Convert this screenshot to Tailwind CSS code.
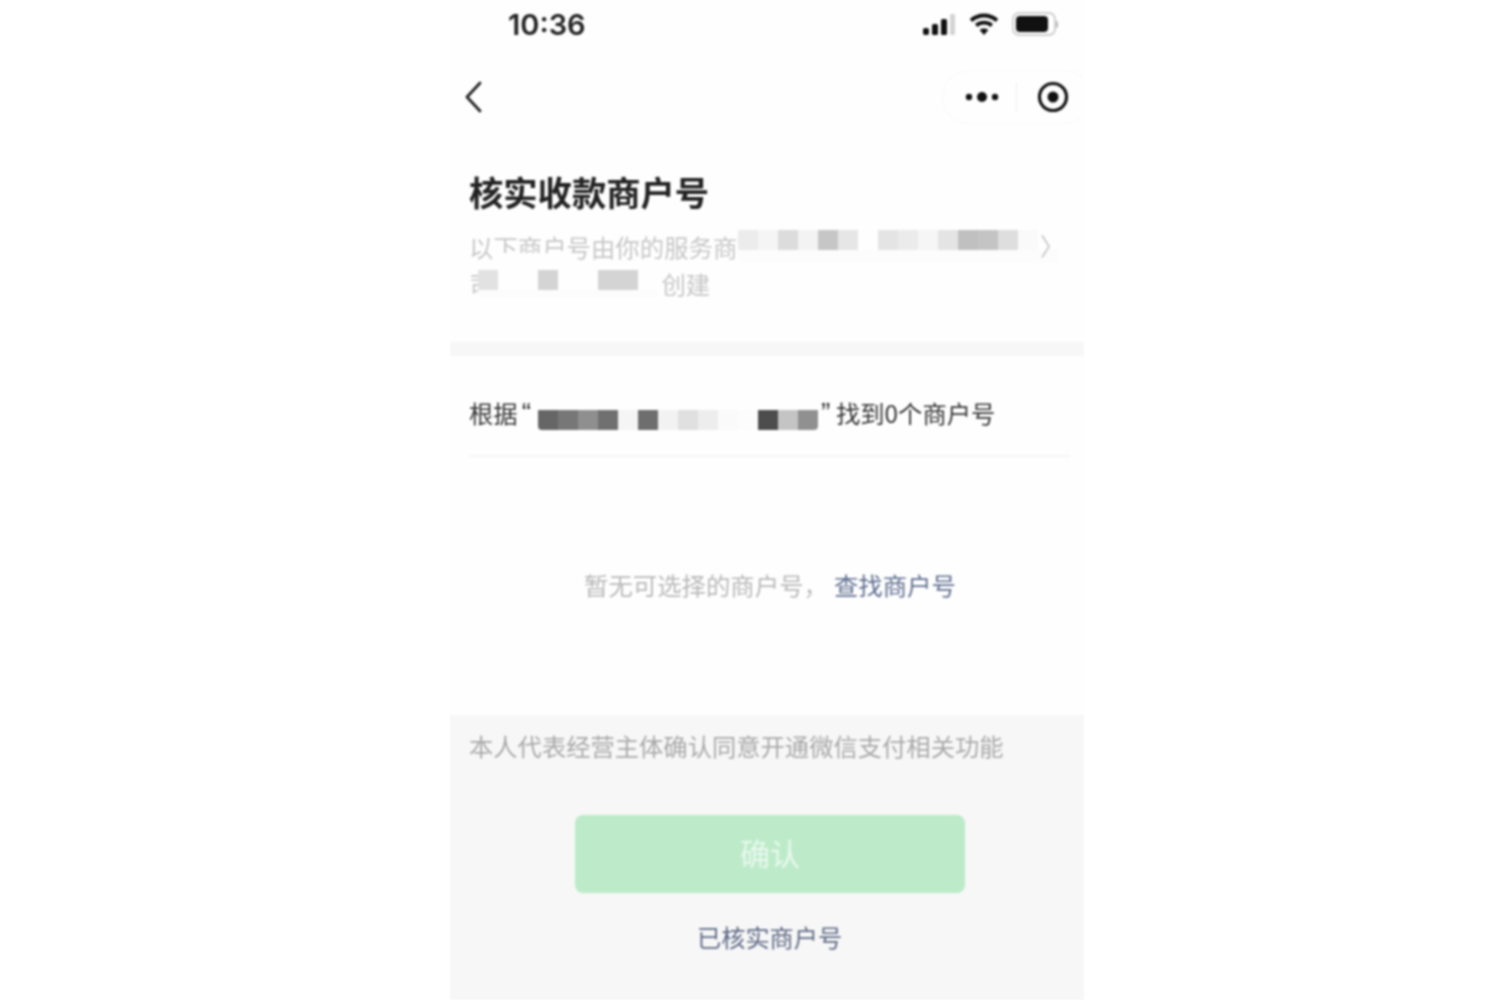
<!DOCTYPE html>
<html lang="zh-CN">
<head>
    <meta charset="UTF-8">
    <title>核实收款商户号</title>
    <script src="https://cdn.jsdelivr.net/npm/@tailwindcss/browser@4"></script>
</head>
<body class="bg-white font-['Noto_Sans_CJK_SC','Noto_Sans',sans-serif]">
    <div class="w-[634px] h-[1000px] ml-[450px] overflow-hidden flex flex-col blur-[0.8px] bg-[#fefefe]">
        <!-- Status bar -->
        <div class="h-[48px] shrink-0 flex items-center justify-between pl-[58px] pr-[26px]">
            <span class="font-['Inter',sans-serif] text-[29px] font-semibold text-[#222] leading-none">10:36</span>
            <div class="flex items-center gap-[13px]">
                <svg width="34" height="24" viewBox="0 0 34 24">
                    <rect x="1" y="16" width="6" height="7" rx="2" fill="#111"/>
                    <rect x="10" y="12" width="6" height="11" rx="1.5" fill="#111"/>
                    <rect x="19" y="7" width="6" height="16" rx="1.5" fill="#111"/>
                    <rect x="28" y="2" width="5" height="21" rx="1" fill="#d4d4d4"/>
                </svg>
                <svg width="30" height="24" viewBox="0 0 30 24" fill="none" stroke="#111" stroke-width="3.8">
                    <path d="M2 8.500C9.500 1.800 20.500 1.800 28 8.500"/>
                    <path d="M7.200 13.500C11.700 9.700 18.300 9.700 22.800 13.500"/>
                    <path d="M15 23l-4.300-5c2.500-1.900 6.100-1.900 8.600 0z" fill="#111" stroke="none"/>
                </svg>
                <div class="flex items-center">
                    <div class="w-[44px] h-[24px] rounded-[7px] border-2 border-[#cfcfcf] p-[2px]">
                        <div class="w-[32px] h-full rounded-[4px] bg-[#111]"></div>
                    </div>
                    <div class="w-[2px] h-[7px] bg-[#bbb] rounded-r-sm"></div>
                </div>
            </div>
        </div>

        <!-- Nav -->
        <div class="h-[54px] mt-[22px] shrink-0 flex items-center justify-between pl-[13px]">
            <svg width="22" height="34" viewBox="0 0 22 34" fill="none" stroke="#222" stroke-width="2.8" stroke-linecap="round" stroke-linejoin="round">
                <path d="M17 3L4 17l13 14"/>
            </svg>
            <div class="w-[150px] h-[54px] -mr-[8px] rounded-full border border-[#f9f9f9] flex items-center pl-[22px] shrink-0">
                <svg width="34" height="12" viewBox="0 0 34 12" fill="#111">
                    <circle cx="4" cy="6" r="3.200"/>
                    <circle cx="17" cy="6" r="5"/>
                    <circle cx="30" cy="6" r="3.200"/>
                </svg>
                <div class="w-px h-[30px] bg-[#eeeeee] ml-[17px]"></div>
                <svg class="ml-[20px]" width="32" height="32" viewBox="0 0 32 32">
                    <circle cx="16" cy="16" r="13.500" fill="none" stroke="#111" stroke-width="3.200"/>
                    <circle cx="16" cy="16" r="5.500" fill="#111"/>
                </svg>
            </div>
        </div>

        <!-- Title -->
        <h1 class="mt-[44px] pl-[19px] h-[48px] shrink-0 text-[34.300px] leading-[46px] font-semibold text-[#222] whitespace-nowrap">核实收款商户号</h1>

        <!-- Description, partly redacted -->
        <div class="relative mt-[12px] h-[74px] shrink-0 pl-[19px] text-[24.400px] leading-[37px] text-[#c6c6c6]">
            <p class="whitespace-nowrap">以下商户号由你的服务商</p>
            <p class="whitespace-nowrap">司<span class="ml-[168px]">创建</span></p>
            <div class="absolute left-[42px] top-[25px] w-[74px] h-[14px] bg-[#fefefe]"></div>
            <div class="absolute left-[288px] top-[2px] flex">
                <div class="w-[20px] h-[20px] bg-[#ececec]"></div>
                <div class="w-[20px] h-[20px] bg-[#f5f5f5]"></div>
                <div class="w-[20px] h-[20px] bg-[#dcdcdc]"></div>
                <div class="w-[20px] h-[20px] bg-[#f3f3f3]"></div>
                <div class="w-[20px] h-[20px] bg-[#c6c6c6]"></div>
                <div class="w-[20px] h-[20px] bg-[#e6e6e6]"></div>
                <div class="w-[20px] h-[20px] bg-[#fefefe]"></div>
                <div class="w-[20px] h-[20px] bg-[#e4e4e4]"></div>
                <div class="w-[20px] h-[20px] bg-[#ebebeb]"></div>
                <div class="w-[20px] h-[20px] bg-[#f6f6f6]"></div>
                <div class="w-[20px] h-[20px] bg-[#e4e4e4]"></div>
                <div class="w-[20px] h-[20px] bg-[#c0c0c0]"></div>
                <div class="w-[20px] h-[20px] bg-[#c4c4c4]"></div>
                <div class="w-[20px] h-[20px] bg-[#dedede]"></div>
                <div class="w-[20px] h-[20px] bg-[#fafafa]"></div>
            </div>
            <div class="absolute left-[288px] top-[22px] w-[320px] h-[12px] bg-[#fcfcfc]"></div>
            <span class="absolute left-[590px] top-[-2px] text-[#c6c6c6]">〉</span>
            <div class="absolute left-[28px] top-[42px] flex">
                <div class="w-[20px] h-[20px] bg-[#e2e2e2]"></div>
                <div class="w-[40px] h-[20px] bg-[#fefefe]"></div>
                <div class="w-[20px] h-[20px] bg-[#d4d4d4]"></div>
                <div class="w-[40px] h-[20px] bg-[#fefefe]"></div>
                <div class="w-[40px] h-[20px] bg-[#d4d4d4]"></div>
                <div class="w-[20px] h-[20px] bg-[#fefefe]"></div>
            </div>
            <div class="absolute left-[28px] top-[62px] w-[180px] h-[8px] bg-[#fcfcfc]"></div>
        </div>

        <div class="mt-[40px] h-[14px] shrink-0 bg-[#f7f7f7]"></div>

        <!-- Result row -->
        <div class="h-[101px] shrink-0 ml-[19px] mr-[14px] border-b-2 border-[#f5f5f5] pt-[39px]">
            <div class="flex items-center h-[36px] text-[24.300px] text-[#333] whitespace-nowrap">
                <span class="w-[49px]">根据</span>
                <span class="w-[20px] pr-[7px] text-right text-[28px] font-['Liberation_Sans',sans-serif]">“</span>
                <div class="flex w-[280px] h-[20px] mt-[14px] rounded-b-sm overflow-hidden">
                    <div class="w-[20px] bg-[#666666]"></div>
                    <div class="w-[20px] bg-[#777777]"></div>
                    <div class="w-[20px] bg-[#8f8f8f]"></div>
                    <div class="w-[20px] bg-[#707070]"></div>
                    <div class="w-[20px] bg-[#f5f5f5]"></div>
                    <div class="w-[20px] bg-[#6e6e6e]"></div>
                    <div class="w-[20px] bg-[#f2f2f2]"></div>
                    <div class="w-[20px] bg-[#e0e0e0]"></div>
                    <div class="w-[20px] bg-[#ededed]"></div>
                    <div class="w-[20px] bg-[#fafafa]"></div>
                    <div class="w-[20px] bg-[#fcfcfc]"></div>
                    <div class="w-[20px] bg-[#4d4d4d]"></div>
                    <div class="w-[20px] bg-[#c4c4c4]"></div>
                    <div class="w-[20px] bg-[#909090]"></div>
                </div>
                <span class="w-[15px] pl-[3px] text-[28px] font-['Liberation_Sans',sans-serif]">”</span>
                <span class="ml-[3px]">找到0个商户号</span>
            </div>
        </div>

        <!-- Empty state -->
        <div class="flex-1 flex items-center pl-[134px] pb-[3px] text-[24.400px] leading-[36px] whitespace-nowrap">
            <span class="text-[#b8b8b8]">暂无可选择的商户号，</span>
            <span class="ml-[6px] text-[#5f6e90]">查找商户号</span>
        </div>

        <!-- Bottom panel -->
        <div class="h-[285px] shrink-0 bg-[#f7f7f7] pl-[19px] pt-[13px]">
            <p class="text-[24.300px] leading-[36px] text-[#a9a9a9] whitespace-nowrap">本人代表经营主体确认同意开通微信支付相关功能</p>
            <button class="block mt-[51px] ml-[106px] w-[390px] h-[78px] pb-[3px] rounded-[8px] bg-[#bdebca] text-[30px] text-[#e9f8ee]">确认</button>
            <p class="mt-[27px] ml-[228px] text-[24.200px] leading-[34px] text-[#5f6985] whitespace-nowrap">已核实商户号</p>
        </div>
    </div>
</body>
</html>
